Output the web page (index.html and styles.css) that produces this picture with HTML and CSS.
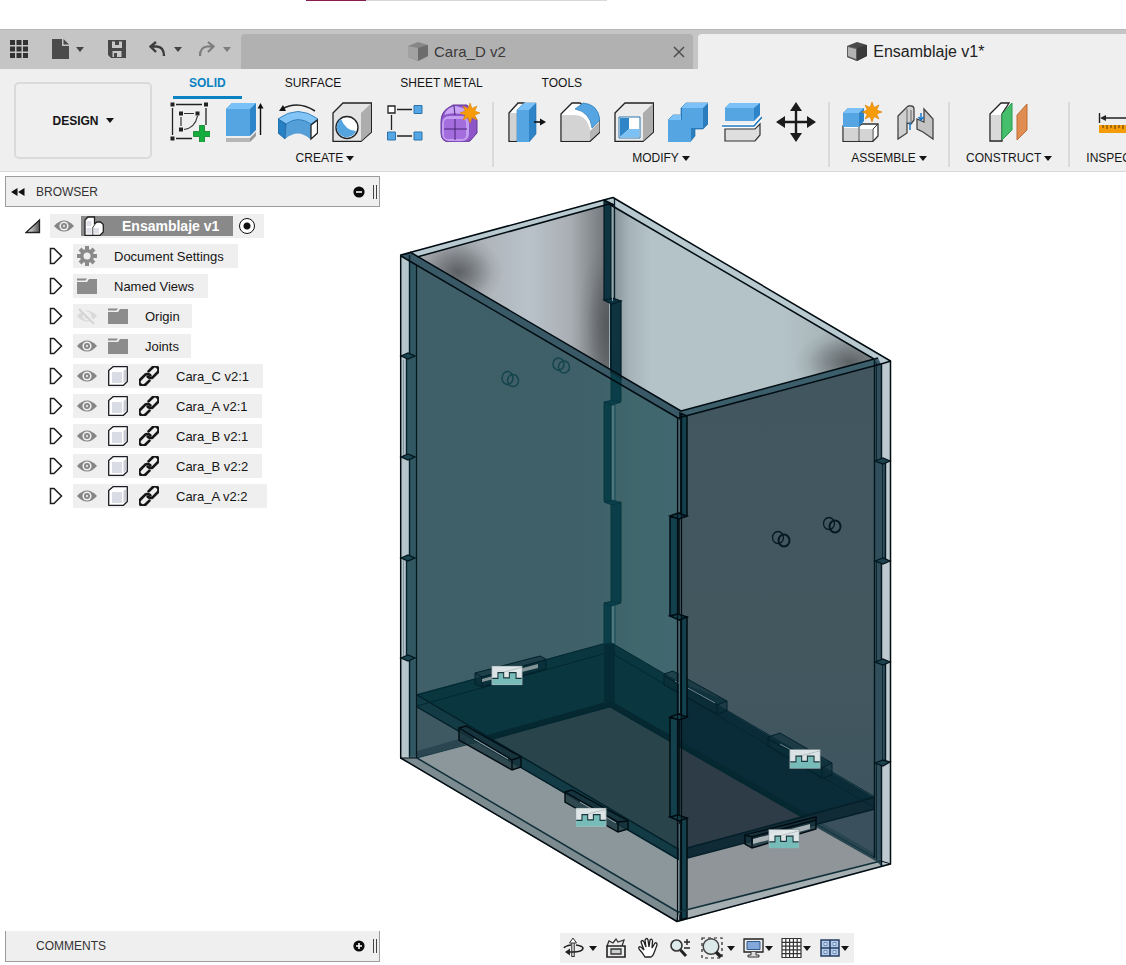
FILE: index.html
```html
<!DOCTYPE html>
<html lang="en">
<head>
<meta charset="utf-8">
<meta name="viewport" content="width=device-width, initial-scale=1">
<title>Ensamblaje v1</title>
<link rel="stylesheet" href="styles.css">
</head>
<body>
<svg class="defs" aria-hidden="true">
  <symbol id="eye" viewBox="0 0 20 20"><path d="M0 10Q10-1 20 10Q10 21 0 10Z" fill="#858585"/><circle cx="10" cy="10" r="4.6" fill="#efefef"/><circle cx="10" cy="10" r="3" fill="#858585"/><circle cx="10" cy="10" r="1.2" fill="#ddd"/></symbol>
  <symbol id="eye-off" viewBox="0 0 20 20"><path d="M0 10Q10-1 20 10Q10 21 0 10Z" fill="#d9d9d9"/><circle cx="10" cy="10" r="4.4" fill="#efefef"/><circle cx="10" cy="10" r="2.6" fill="#d9d9d9"/><path d="M3 2L18 18" stroke="#efefef" stroke-width="4"/><path d="M2 3L17 18" stroke="#d3d3d3" stroke-width="1.8"/></symbol>
  <symbol id="folder" viewBox="0 0 20 20"><path d="M0 6H10L12 3H20V18H0Z" fill="#8c8c8c"/><path d="M0 2.500H10L8.500 4.500H0Z" fill="#8c8c8c"/></symbol>
  <symbol id="gear" viewBox="0 0 20 20"><g stroke="#8a8a8a" stroke-width="4"><path d="M10 0V20M0 10H20M3 3L17 17M17 3L3 17"/></g><circle cx="10" cy="10" r="7" fill="#8a8a8a"/><circle cx="10" cy="10" r="3.500" fill="#efefef"/></symbol>
  <symbol id="body" viewBox="0 0 20 20"><path d="M.7 4.500L5 .7H19.300V15.500L15.500 19.300H.7Z" fill="#fff" stroke="#1b1b22" stroke-width="1.300" stroke-linejoin="round"/><path d="M4 6H14V17H4Z" fill="#d9dce4"/><path d="M15.500 5L18 3V15L15.500 17Z" fill="#c9ccd4"/></symbol>
  <symbol id="link" viewBox="0 0 20 20"><g transform="rotate(-45 10 10)" fill="none" stroke="#161616" stroke-width="2.700" stroke-linecap="round"><path d="M7 13.600H1.500A3.600 3.600 0 0 1 1.500 6.400H8A3.600 3.600 0 0 1 11.300 10.500"/><path d="M13 6.400H18.500A3.600 3.600 0 0 1 18.500 13.600H12A3.600 3.600 0 0 1 8.700 9.500"/></g></symbol>
  <symbol id="tri" viewBox="0 0 14 18"><path d="M1.500 1.500H5L12.500 9L5 16.500H1.500Z" fill="#fff" stroke="#1c1c1c" stroke-width="1.500"/></symbol>
  <symbol id="star" viewBox="-10 -10 20 20"><path d="M0-10L2-4.500L7-7L4.700-2L10 0L4.700 2L7 7L2 4.500L0 10L-2 4.500L-7 7L-4.700 2L-10 0L-4.700-2L-7-7L-2-4.500Z" fill="#f79b08" stroke="#d98300" stroke-width=".6"/></symbol>
  <symbol id="badge" viewBox="0 0 33 21"><path d="M.5 .5H32.500V20.500H.5Z" fill="#e4eaec" opacity=".96"/><path d="M1 14H7V7.500H13V13H19V7.500H26V14H32V20H1Z" fill="#78bcba"/><path d="M9 8L32 2" stroke="#b4c0c2"/><path d="M1 13.500H7V7.500H13V13H19V7.500H26V13.500H32" fill="none" stroke="#16343a" stroke-width="1.100"/><path d="M.5 .5H32.500V20.500H.5Z" fill="none" stroke="#6f8286" stroke-width=".6"/></symbol>
</svg>

<div class="app">
<div class="strip"><span class="strip-mark"></span><span class="strip-line"></span></div>

<header>
<div class="tabbar">
  <div class="quick">
    <button aria-label="Data panel"><svg width="19" height="19"><g fill="#333"><path d="M0 0h5v5H0zM6.500 0h5v5h-5zM13 0h5v5h-5zM0 6.500h5v5H0zM6.500 6.500h5v5h-5zM13 6.500h5v5h-5zM0 13h5v5H0zM6.500 13h5v5h-5zM13 13h5v5h-5z"/></g></svg></button>
    <button class="q-file" aria-label="File"><svg width="17" height="20"><path d="M0 0H10V7H17V20H0Z" fill="#4b4b4b"/><path d="M11.500 0L17 5.500H11.500Z" fill="#4b4b4b"/></svg><i class="caret"></i></button>
    <button class="q-save" aria-label="Save"><svg width="18" height="19"><path d="M0 0H18V18H3L0 15Z" fill="#484848"/><path d="M4 1.500H14V8H4ZM4.500 11H13.500V17H4.500Z" fill="#c8c8c8"/><path d="M7 0H11V5H7ZM6 13H9V17H6Z" fill="#484848"/></svg></button>
    <button class="q-undo" aria-label="Undo"><svg width="17" height="17"><path d="M7 1L1.500 5.500L7 11M1.500 5.500H8Q15 6 15 15" fill="none" stroke="#3c3c3c" stroke-width="2.400"/></svg><i class="caret"></i></button>
    <button class="q-redo" aria-label="Redo"><svg width="17" height="17"><path d="M10 1L15.500 5.500L10 11M15.500 5.500H9Q2 6 2 15" fill="none" stroke="#7d7d7d" stroke-width="2.200"/></svg><i class="caret"></i></button>
  </div>
  <div class="doc-tab">
    <a href="#d"><svg width="20" height="20"><path d="M0 4L10 0L20 3V14L10 19L0 15Z" fill="#868686"/><path d="M0 4L10 6V19L0 15Z" fill="#a2a2a2"/><path d="M10 6L20 3V14L10 19Z" fill="#6d6d6d"/></svg>Cara_D v2</a>
    <button aria-label="Close tab"><svg width="12" height="12"><path d="M1 1L11 11M11 1L1 11" stroke="#4e4e4e" stroke-width="1.500"/></svg></button>
  </div>
  <div class="doc-tab active">
    <a href="#e"><svg width="20" height="20"><path d="M0 4L10 0L20 3V14L10 19L0 15Z" fill="#4a4a4a"/><path d="M0 4L10 6V19L0 15Z" fill="#5b5b5b"/><path d="M1 5L9 7V17L1 14Z" fill="#b2b2b2"/><path d="M10 6L20 3V14L10 19Z" fill="#393939"/></svg>Ensamblaje v1*</a>
  </div>
</div>

<div class="ribbon">
  <button class="workspace-btn">DESIGN<i class="caret"></i></button>
  <div class="ribbon-main">
    <nav class="modes"><a class="on" href="#solid">SOLID</a><a href="#surface">SURFACE</a><a href="#sheet">SHEET METAL</a><a href="#tools">TOOLS</a></nav>
    <div class="groups">
      <section class="group create">
        <div class="tools">
          <button aria-label="Create sketch"><svg viewBox="0 0 40 40"><path d="M6 2.500H32M2.500 6V33M6 36.500H22M36 6V23" stroke="#222" stroke-width="1.300"/><path d="M14 11.500H24M11 15V24M27.500 14Q25 26 14 27.500" fill="none" stroke="#333" stroke-width="1.200"/><path d="M.5.5h4v4h-4zM34 .5h4v4h-4zM.5 34.500h4v4h-4zM9 9.500h4v4H9zM25.500 9.500h4v4h-4zM9 25.500h4v4H9z" fill="#222"/><path d="M29.500 23.500h5v6h6v5h-6v6h-5v-6h-6v-5h6z" fill="#16ad3c" stroke="#0b7f28" stroke-width=".8"/></svg></button>
          <button aria-label="Extrude"><svg viewBox="0 0 40 40"><path d="M2 36H26L32 30V34L26 40H2Z" fill="#999"/><path d="M2 36H26V40H2Z" fill="#b6b6b6"/><path d="M2 7L8 1H32V28L26 34H2Z" fill="#2e84c8"/><path d="M2 7L8 1H32L26 7Z" fill="#7ac1f8"/><path d="M2 7H26V34H2Z" fill="#54a5e2"/><path d="M36.500 33V5" stroke="#111" stroke-width="1.400"/><path d="M33.500 6.500L36.500 1L39.500 6.500Z" fill="#111"/></svg></button>
          <button aria-label="Revolve"><svg viewBox="0 0 40 40"><path d="M0 17Q20 2 40 17L38 33L32 37Q20 26 7 37L0 31Z" fill="#559fd8"/><path d="M0 17Q20 2 40 17L33 22Q20 13 8 22Z" fill="#82c4f6" stroke="#2370aa" stroke-width=".7"/><path d="M0 17L8 22L7 37L0 31Z" fill="#2580c4" stroke="#1f6097" stroke-width=".7"/><path d="M33 23L39.500 18V31L33 37Z" fill="#fff" stroke="#222" stroke-width="1.300"/><path d="M37 9Q20-2 4 7" fill="none" stroke="#222" stroke-width="1.500"/><path d="M1 9L5 3L8 9Z" fill="#111"/></svg></button>
          <button aria-label="Hole"><svg viewBox="0 0 40 40"><path d="M1 11L11 1H39.500V30L29 39.300H1Z" fill="#e4e4e4" stroke="#222" stroke-width="1.300"/><path d="M29 11L39 1.500V30L29 39Z" fill="#adadad"/><circle cx="15" cy="25.500" r="11" fill="#fff" stroke="#222" stroke-width="1.400"/><path d="M9 17A10 10 0 1 0 24 29Q14 29 9 17Z" fill="#54a4df"/></svg></button>
          <button aria-label="Rectangular pattern"><svg viewBox="0 0 40 40"><path d="M11 7.500H26M5.500 13V28M11 34H26" stroke="#222" stroke-width="1.300"/><path d="M2 4h7v7H2z" fill="#fff" stroke="#222" stroke-width="1.300"/><path d="M28 3.500h8v8h-8zM1.500 30h8v8h-8zM28 30h8v8h-8z" fill="#54a6e4" stroke="#2d73ab"/></svg></button>
          <button aria-label="Create form"><svg viewBox="0 0 40 40"><path d="M1 20Q1 10 8 6L13 3H27L37 18V31L30 39Q24 41 10 40Q1 40 1 31Z" fill="#8d55c7" stroke="#65389b"/><path d="M4 13Q7 5 16 4L26 7L29 14Q14 9 4 13Z" fill="#c9a4f4"/><rect x="2" y="14" width="27" height="25" rx="7" fill="#c39df0"/><rect x="4" y="17" width="22" height="20" rx="4" fill="#a36ddd"/><path d="M15 17V38M4 27H27M14 4L15 13" stroke="#4b2478" fill="none"/><use href="#star" x="20" y="1" width="20" height="20"/></svg></button>
        </div>
        <button class="group-name">CREATE<i class="caret"></i></button>
      </section>
      <section class="group">
        <div class="tools">
          <button aria-label="Press pull"><svg viewBox="0 0 40 40"><path d="M3 11L12 1H18V33L11 39.300H3Z" fill="#fff" stroke="#222" stroke-width="1.300"/><path d="M4 11H11V38.500H4Z" fill="#d2d2d2"/><path d="M11 8L18 1H30V32L23 40H11Z" fill="#2f84c8" stroke="#1f6ba8" stroke-width=".6"/><path d="M11 8L18 1H30L23 8Z" fill="#79c0f6"/><path d="M11 8H23V40H11Z" fill="#54a5e2"/><path d="M28 20H36" stroke="#111" stroke-width="1.600"/><path d="M34 16.500L40 20L34 23.500Z" fill="#111"/></svg></button>
          <button aria-label="Fillet"><svg viewBox="0 0 40 40"><path d="M1 12L12 1H20L40 18V30L30 39.300H1Z" fill="#fff" stroke="#222" stroke-width="1.300"/><path d="M2 13H12Q27 12 30 28V38.500H2Z" fill="#d3d3d3"/><path d="M30 29L39 20V30L30 38.500Z" fill="#b5b5b5"/><path d="M15 7L23 1Q38 2 40 18L32 26Q30 10 15 7Z" fill="#54a5e2" stroke="#2a79b5" stroke-width=".7"/></svg></button>
          <button aria-label="Shell"><svg viewBox="0 0 40 40"><path d="M1 11L11 1H39.500V30L29 39.300H1Z" fill="#ececec" stroke="#222" stroke-width="1.300"/><path d="M29 11L39 1.500V30L29 39Z" fill="#adadad"/><path d="M5 15H26V36H5Z" fill="#fff" stroke="#2b74ad"/><path d="M6 16H15V27L6 35Z" fill="#2f85c5"/><path d="M15 27H25V35H6Z" fill="#7bc1f5"/></svg></button>
          <button aria-label="Combine"><svg viewBox="0 0 40 40"><path d="M0 18L5 13H13V6L18 1H40V22L35 27H27V34L22 40H0Z" fill="#2b7dbe" stroke="#2474b3" stroke-width=".7"/><path d="M0 18H14V6H35V26H23V40H0Z" fill="#54a5e2"/><path d="M13 6L18 1H40L35 6ZM0 18L5 13H13V18Z" fill="#7cc2f8"/></svg></button>
          <button aria-label="Split body"><svg viewBox="0 0 40 40"><path d="M3 6L8 1H38V13L32 19H3Z" fill="#2e84c8"/><path d="M3 6L8 1H38L32 6Z" fill="#7bc1f7"/><path d="M3 6H32V19H3Z" fill="#54a5e2"/><path d="M3 27H33L38 22V33L33 39H3Z" fill="#dedede" stroke="#333" stroke-width="1.200"/><path d="M0 24H32L40 15" fill="none" stroke="#fff" stroke-width="4"/><path d="M0 24H32L40 15" fill="none" stroke="#2279bd" stroke-width="1.700"/></svg></button>
          <button aria-label="Move"><svg viewBox="0 0 40 40"><path d="M20 7V33M7 20H33" stroke="#1b1b1b" stroke-width="2.400"/><path d="M20 0L26 9H14ZM20 40L26 31H14ZM0 20L9 14V26ZM40 20L31 14V26Z" fill="#1b1b1b"/></svg></button>
        </div>
        <button class="group-name">MODIFY<i class="caret"></i></button>
      </section>
      <section class="group">
        <div class="tools">
          <button aria-label="New component"><svg viewBox="0 0 40 40"><path d="M1 24H17L20 22H36V34L31 39.300H1Z" fill="#fff" stroke="#333" stroke-width="1.300"/><path d="M2 26H16V38.500H2ZM18 27H30V38.500H18Z" fill="#d4d4d4"/><path d="M17 25V39M31 27L36 22M31 27V39" stroke="#333"/><path d="M1 11L6 6H22V19L17 25H1Z" fill="#2e84c8"/><path d="M1 11L6 6H22L17 11Z" fill="#7bc1f7"/><path d="M1 11H17V25H1Z" fill="#54a5e2"/><use href="#star" x="20" y="0" width="20" height="20"/></svg></button>
          <button aria-label="Joint"><svg viewBox="0 0 40 40"><path d="M2 14L10 6Q12 3 15 4Q18 4 18 7V18L15 22L11 21V31L2 37Z" fill="#cfcfcf" stroke="#444" stroke-width="1.300"/><path d="M11 7V21M15 22V8" fill="none" stroke="#666"/><path d="M28 7L37 17V37L27 30L21 27V17L28 20Z" fill="#c4c4c4" stroke="#444" stroke-width="1.300"/><path d="M14 20V28M25 11V18M22.500 15L25 18L27.500 15" fill="none" stroke="#1c79c8" stroke-width="1.500"/></svg></button>
        </div>
        <button class="group-name">ASSEMBLE<i class="caret"></i></button>
      </section>
      <section class="group wide">
        <div class="tools">
          <button aria-label="Offset plane"><svg viewBox="0 0 40 40"><path d="M1 12L12 1H20L13 12V39H1Z" fill="#fff" stroke="#222" stroke-width="1.300"/><path d="M2 13H12V38H2Z" fill="#d9d9d9"/><path d="M13 12L23 1V28L13 38Z" fill="#45bf6c" stroke="#299b4d"/><path d="M28 13L38 2V28L28 38Z" fill="#e18c50" stroke="#bd6d37"/></svg></button>
        </div>
        <button class="group-name">CONSTRUCT<i class="caret"></i></button>
      </section>
      <section class="group wide">
        <div class="tools">
          <button aria-label="Measure"><svg viewBox="0 0 40 40"><path d="M1.500 11V21M38.500 11V21M4 16H36" stroke="#222" stroke-width="1.400"/><path d="M2 16L8 13V19ZM38 16L32 13V19Z" fill="#222"/><path d="M1 23H39V31H1Z" fill="#f59c0b"/><path d="M5 23v3M9 23v4M13 23v3M17 23v4M21 23v3M25 23v4M29 23v3M33 23v4" stroke="#5b3a00"/></svg></button>
        </div>
        <button class="group-name">INSPECT<i class="caret"></i></button>
      </section>
    </div>
  </div>
</div>
</header>

<main class="workspace">
  <aside class="side">
    <div class="panel">
      <button aria-label="Collapse browser"><svg width="14" height="8"><path d="M6.500 0V8L0 4ZM13.500 0V8L7 4Z" fill="#111"/></svg></button>
      <h2>BROWSER</h2>
      <button aria-label="Hide all"><svg width="12" height="12"><circle cx="6" cy="6" r="5.600" fill="#0c0c0c"/><path d="M3 6H9" stroke="#fff" stroke-width="1.600"/></svg></button>
      <span class="grip"></span>
    </div>
    <ul class="tree">
      <li class="root"><button class="exp" aria-label="Collapse"><svg width="16" height="16"><defs><linearGradient id="rg"><stop stop-color="#fff"/><stop offset="1" stop-color="#555"/></linearGradient></defs><path d="M1 14.500L14.500 2V14.500Z" fill="url(#rg)" stroke="#222" stroke-width="1.300"/></svg></button>
        <div class="node"><svg><use href="#eye"/></svg><span class="selected"><svg class="asm" viewBox="0 0 20 20"><path d="M1 4L4 1H10.500V8L13 6H16.500L19.300 8.500V16L16 19.300H1Z" fill="#fff" stroke="#222" stroke-width="1.300"/><path d="M2.500 5H7.500V10H2.500ZM2.500 12H7.500V17.500H2.500ZM10 12H15V17.500H10Z" fill="#dde0e6"/><path d="M8.800 11V19M9 11L11 8.500" stroke="#444"/></svg><b>Ensamblaje v1</b></span><input type="radio" checked aria-label="Activate component"></div></li>
      <li><button class="exp" aria-label="Expand"><svg><use href="#tri"/></svg></button><div class="node"><svg><use href="#gear"/></svg><span>Document Settings</span></div></li>
      <li><button class="exp" aria-label="Expand"><svg><use href="#tri"/></svg></button><div class="node"><svg><use href="#folder"/></svg><span>Named Views</span></div></li>
      <li><button class="exp" aria-label="Expand"><svg><use href="#tri"/></svg></button><div class="node short"><svg><use href="#eye-off"/></svg><svg><use href="#folder"/></svg><span>Origin</span></div></li>
      <li><button class="exp" aria-label="Expand"><svg><use href="#tri"/></svg></button><div class="node short"><svg><use href="#eye"/></svg><svg><use href="#folder"/></svg><span>Joints</span></div></li>
      <li><button class="exp" aria-label="Expand"><svg><use href="#tri"/></svg></button><div class="node"><svg><use href="#eye"/></svg><svg><use href="#body"/></svg><svg><use href="#link"/></svg><span>Cara_C v2:1</span></div></li>
      <li><button class="exp" aria-label="Expand"><svg><use href="#tri"/></svg></button><div class="node"><svg><use href="#eye"/></svg><svg><use href="#body"/></svg><svg><use href="#link"/></svg><span>Cara_A v2:1</span></div></li>
      <li><button class="exp" aria-label="Expand"><svg><use href="#tri"/></svg></button><div class="node"><svg><use href="#eye"/></svg><svg><use href="#body"/></svg><svg><use href="#link"/></svg><span>Cara_B v2:1</span></div></li>
      <li><button class="exp" aria-label="Expand"><svg><use href="#tri"/></svg></button><div class="node"><svg><use href="#eye"/></svg><svg><use href="#body"/></svg><svg><use href="#link"/></svg><span>Cara_B v2:2</span></div></li>
      <li><button class="exp" aria-label="Expand"><svg><use href="#tri"/></svg></button><div class="node last"><svg><use href="#eye"/></svg><svg><use href="#body"/></svg><svg><use href="#link"/></svg><span>Cara_A v2:2</span></div></li>
    </ul>
    <div class="panel comments">
      <h2>COMMENTS</h2>
      <button aria-label="Add comment"><svg width="12" height="12"><circle cx="6" cy="6" r="5.600" fill="#0c0c0c"/><path d="M3 6H9M6 3V9" stroke="#fff" stroke-width="1.600"/></svg></button>
      <span class="grip"></span>
    </div>
  </aside>

  <section class="viewport">
    <svg class="model" viewBox="398 195 496 729" role="img" aria-label="Assembly of a transparent box">
      <defs>
        <linearGradient id="wl" gradientUnits="userSpaceOnUse" x1="417" y1="0" x2="604" y2="0"><stop stop-color="#a9adb2"/><stop offset=".2" stop-color="#a3a7ac"/><stop offset=".4" stop-color="#b0b7bd"/><stop offset=".6" stop-color="#b9c2ca"/><stop offset=".82" stop-color="#a9aeb3"/><stop offset="1" stop-color="#75797d"/></linearGradient>
        <linearGradient id="wr" gradientUnits="userSpaceOnUse" x1="614" y1="0" x2="874" y2="0"><stop stop-color="#87949a"/><stop offset=".06" stop-color="#a6b4b9"/><stop offset=".14" stop-color="#b4c3c8"/><stop offset=".65" stop-color="#b4c3c8"/><stop offset="1" stop-color="#9ca7aa"/></linearGradient>
        <radialGradient id="sh"><stop stop-color="#46494b" stop-opacity=".75"/><stop offset=".4" stop-color="#46494b" stop-opacity=".42"/><stop offset=".75" stop-color="#46494b" stop-opacity=".1"/><stop offset="1" stop-color="#46494b" stop-opacity="0"/></radialGradient>
        <linearGradient id="fl" x1="0" x2="1"><stop stop-color="#405f68"/><stop offset=".65" stop-color="#3f6068"/><stop offset=".85" stop-color="#3f676c"/><stop offset="1" stop-color="#416870"/></linearGradient>
        <linearGradient id="fr" x1="0" y1="0" x2="0" y2="1"><stop stop-color="#41565f"/><stop offset=".6" stop-color="#43575f"/><stop offset="1" stop-color="#3b545f"/></linearGradient>
        <clipPath id="cl"><path d="M417 257L609 204V370L604 367Z"/></clipPath>
        <clipPath id="cr"><path d="M613 205L874 359L682 411L613 370Z"/></clipPath>
      </defs>

      <!-- rear walls seen through the open top -->
      <path d="M400 255L612 197L891 361V864L677 922L400 758Z" fill="#b8c9cf"/>
      <path d="M417 257L609 204V370L604 367Z" fill="url(#wl)"/>
      <ellipse cx="458" cy="272" rx="46" ry="36" fill="url(#sh)" clip-path="url(#cl)"/>
      <ellipse cx="612" cy="325" rx="34" ry="90" fill="url(#sh)" clip-path="url(#cl)"/>
      <path d="M613 205L874 359L682 411L613 370Z" fill="url(#wr)"/>
      <ellipse cx="850" cy="362" rx="56" ry="34" fill="url(#sh)" clip-path="url(#cr)"/>

      <!-- front walls -->
      <path d="M409 259L678 418V860L417 758H409Z" fill="url(#fl)"/>
      <path d="M678 418L881 364V809L678 860Z" fill="url(#fr)"/>
      <path d="M400 256L410 252L681 411L678 418Z" fill="#3a5967"/>
      <path d="M678 418L681 411L878 358L881 364Z" fill="#3c5f6b"/>

      <!-- base plate and the region under the shelf -->
      <path d="M417 758L610 707L881 861L678 912Z" fill="#8b979a"/>
      <path d="M678 858L815 822L881 861L678 912Z" fill="#8f9599"/>
      <path d="M417 705L505 735L417 758Z" fill="#3f5962"/>
      <path d="M815 822L875 807V860L815 826Z" fill="#3a515d"/>
      <path d="M417 751L466 737V744L417 758Z" fill="#2b4650"/>
      <path d="M815 819L881 857V864L807 822Z" fill="#29454f"/>
      <path d="M400 758L417 758L678 912L677 922Z" fill="#7b8b90"/>
      <path d="M677 922L678 912L881 861L891 864Z" fill="#a5afb2"/>

      <!-- shelf -->
      <path d="M417 694L610 642L678 682V860L417 707Z" fill="#09363f"/>
      <path d="M678 682L875 798V808L678 860Z" fill="#0a2b38"/>
      <path d="M493 739L610 707L678 746V849Z" fill="#29444a"/>
      <path d="M678 746L804 818L678 851Z" fill="#2d3c46"/>
      <path d="M488 738L610 704L810 819" fill="none" stroke="#052831" stroke-width="6"/>
      <path d="M417 695L678 850V860L417 707Z" fill="#123b46"/>
      <path d="M678 850L875 797V809L678 860Z" fill="#102a36"/>
      <g fill="none" stroke="#032832" stroke-width="1">
        <path d="M417 695L610 642L875 797M417 706L610 652L875 808"/>
        <path d="M417 758L610 707L881 861" opacity=".6"/>
      </g>
      <path d="M417 695L680 850L875 797M417 707L680 860L875 809" fill="none" stroke="#041f28" stroke-width="1.300"/>

      <!-- shelf tenons -->
      <g fill="#0b2e39" fill-opacity=".65" stroke="#03202a" stroke-width="1">
        <path d="M475 673L540 656L546 659V669L482 687L475 684Z"/><path d="M482 677L546 660M482 677V687M475 673L482 677"/>
        <path d="M664 674L673 671L727 701V711L717 714L664 685Z"/><path d="M664 676L717 705L727 701M717 705V714"/>
        <path d="M768 737L780 733L832 763V775L822 778L768 746Z"/><path d="M768 739L822 768L832 763M822 768V778"/>
      </g>
      <path d="M482 679L538 664V668L482 682Z" fill="#839396"/>
      <path d="M675 681L715 703M780 744L820 766" stroke="#71858d" stroke-width="1"/>
      <g fill="#18333c" fill-opacity=".8" stroke="#000c12" stroke-width="1.400">
        <path d="M459 728L466 726L521 757V767L512 770L459 740Z"/><path d="M459 728L512 760L521 757M512 760V770"/>
        <path d="M565 792L572 790L628 821V829L618 832L565 802Z"/><path d="M565 792L618 822L628 821M618 822V832"/>
        <path d="M745 835L816 817V829L752 848L745 844Z"/><path d="M745 835L752 837L816 820M752 837V848"/>
      </g>
      <path d="M474 739L508 759M580 802L616 823" stroke="#9aabb0" stroke-width="1"/>
      <path d="M753 839L810 824V829L753 844Z" fill="#aab4b7"/>

      <!-- rear corner joint -->
      <g fill="#0e3441" stroke="#031d26" stroke-width="1.200">
        <path d="M604 200L611 204V303L604 300Z"/><path d="M611 302L621 301V379L611 373Z"/>
        <path d="M604 300L613 298L621 301L612 304Z"/>
      </g>
      <path d="M612.500 203V301" stroke="#91a7ae" stroke-width="1"/><path d="M614.500 199V300M610.500 303V370" stroke="#071f28" stroke-width="1.300"/>
      <g fill="#0a3e48" stroke="#083741" stroke-width="1">
        <path d="M611 373L621 379V401L611 403Z"/><path d="M604 402H611V504L604 501Z"/><path d="M611 503L621 502V602L611 604Z"/><path d="M604 603H611V642L604 644Z"/>
        <path d="M604 402L613 400L621 402L612 405ZM604 502L613 500L621 503L612 505ZM604 603L613 601L621 603L612 606Z"/>
      </g>
      <path d="M613 406V500M613 606V643" stroke="#5e8990"/><path d="M615 404V501M615 605V645" stroke="#174c56"/>
      <path d="M604 644H615V702H604Z" fill="#052b36"/>

      <!-- left edge -->
      <path d="M401 257L409 261V356H401ZM401 357H406V457H401ZM401 458H409V558H401ZM401 559H406V659H401ZM401 660H409V756L401 758Z" fill="#b7c6cc"/>
      <path d="M409 261L417 265V356H409ZM406 357H417V457H406ZM409 458H417V558H409ZM406 559H417V659H406ZM409 660H417V756H409Z" fill="#315762"/>
      <g fill="none" stroke="#03202b" stroke-width="1.400"><path d="M409.500 255V356M406.500 357V457M409.500 458V558M406.500 559V659M409.500 660V757"/></g>
      <path d="M403.500 360V456M403.500 560V658" stroke="#718990" stroke-width=".8"/>
      <g fill="#184550" stroke="#02151c" stroke-width="1.300"><path d="M401 356L408 353L415 356L408 359ZM401 457L408 454L415 457L408 460ZM401 558L408 555L415 558L408 561ZM401 658L408 655L415 658L408 661Z"/></g>
      <path d="M416.500 265V758" stroke="#03171d" stroke-width="1.200"/>

      <!-- right edge -->
      <path d="M881 364L891 361V864H881Z" fill="#bdc9ce"/>
      <path d="M874 360L881 364V461H886V561H881V662H886V763H881V866L874 858Z" fill="#304e5b"/>
      <g fill="none" stroke="#03151d" stroke-width="1.400"><path d="M874.500 360V858"/><path d="M881.500 364V461M885.500 462V561M881.500 562V662M885.500 663V762M881.500 763V866"/><path d="M876.500 363V460M882.500 462V560M876.500 562V661M882.500 663V761M876.500 763V860" stroke-width=".7"/></g>
      <g fill="#1d424e" stroke="#02151c" stroke-width="1.300"><path d="M875 461L883 458L890 461L883 464ZM875 561L883 558L890 561L883 564ZM875 662L883 659L890 662L883 665ZM875 763L883 760L890 762L883 766Z"/></g>

      <!-- front corner joint -->
      <g fill="#12404c" stroke="#000c12" stroke-width="1.500">
        <path d="M680 413L687 416V516L680 518Z"/><path d="M670 517L679 518V618L670 616Z"/><path d="M680 619L687 617V717L680 719Z"/><path d="M670 718L679 719V819L670 817Z"/><path d="M680 820L687 818V918L680 920Z"/>
        <path d="M670 516L678 513L687 516L679 519ZM670 616L678 614L687 617L679 620ZM670 717L678 714L687 717L679 720ZM670 817L678 815L687 818L679 821Z"/>
      </g>
      <path d="M677.500 418V921M681.500 413V921" stroke="#000c12" stroke-width="1.200"/><path d="M679.500 420V512M679.500 621V713M679.500 824V915" stroke="#49666e"/>

      <!-- outlines -->
      <g fill="none" stroke="#000c12" stroke-width="1.500" stroke-linejoin="round">
        <path d="M400.700 255V758L677 921.500L890.500 864V361L613 197.500L400.700 255L410 253"/>
        <path d="M417 257L609 204L874 359M410 252L681 411L878 358M401 256L678 418L881 364L891 361M604 200L614 205"/>
        <path d="M417 758L678 912L881 861" stroke="#112f39"/>
        <path d="M678 912L677 921M881 861L891 864M417 758L400 758" stroke-width="1"/>
      </g>

      <!-- bolt holes -->
      <g fill="none" stroke="#15444d" stroke-width="1.500"><ellipse cx="507.500" cy="378" rx="5.500" ry="6.500"/><ellipse cx="513" cy="380.500" rx="5.500" ry="6"/><ellipse cx="558.500" cy="364" rx="5.500" ry="6"/><ellipse cx="564" cy="367" rx="5.500" ry="6"/></g>
      <g fill="none" stroke="#051920" stroke-width="1.300"><ellipse cx="778" cy="537.500" rx="5.500" ry="6"/><ellipse cx="784" cy="540.500" rx="5.500" ry="6" stroke-width="1.900"/><ellipse cx="829" cy="523.500" rx="5.500" ry="6"/><ellipse cx="835" cy="526.500" rx="5.500" ry="6" stroke-width="1.900"/></g>

      <use href="#badge" x="490.500" y="665.500" width="33" height="20"/>
      <use href="#badge" x="574.500" y="807.500" width="33" height="20"/>
      <use href="#badge" x="788.500" y="749" width="33" height="20"/>
      <use href="#badge" x="767.500" y="829" width="33" height="20"/>
    </svg>

    <div class="navbar" role="toolbar" aria-label="Navigation">
      <button aria-label="Orbit"><svg viewBox="0 0 22 22"><path d="M10 3V20" stroke="#333" stroke-width="3.500"/><path d="M10 4V19" stroke="#fff" stroke-width="1.300"/><path d="M6.500 6L10 1L13.500 6Z" fill="#fff" stroke="#333"/><path d="M13 8Q20 9 20 11.500Q19 15 10 15H3M8 8Q2 9 1 11" fill="none" stroke="#222" stroke-width="1.600"/><path d="M2 15L7 11.500V18.500Z" fill="#222"/></svg><i class="caret"></i></button>
      <button class="plain" aria-label="Look at"><svg viewBox="0 0 22 22"><path d="M2 9L4 4L8 6L11 2L13 5L19 3L17 9" fill="#eee" stroke="#333" stroke-width="1.300"/><path d="M2 9H20V20H2Z" fill="#eee" stroke="#222" stroke-width="1.600"/><path d="M6 12H16V17H6Z" fill="#ccd2d4" stroke="#333" stroke-width="1.300"/></svg></button>
      <button class="plain" aria-label="Pan"><svg viewBox="0 0 22 22"><path d="M8 20Q5 15 2 12Q1 9 4 10L7 13L4 5Q5 2 7 5L9 10L8 3Q10 0 11 3L12 10L13 3Q15 1 15.500 4L15 11L18 6Q20 5 20 8L17 16Q16 19 14 20Z" fill="#fff" stroke="#222" stroke-width="1.300"/></svg></button>
      <button class="plain" aria-label="Zoom"><svg viewBox="0 0 22 22"><circle cx="7.500" cy="8.500" r="5.500" fill="#dceaea" stroke="#333" stroke-width="1.600"/><path d="M11.500 13L17 19" stroke="#222" stroke-width="3"/><path d="M15 5H21M18 2V8M15 11H21" stroke="#222" stroke-width="1.400"/></svg></button>
      <button aria-label="Fit"><svg viewBox="0 0 22 22"><path d="M1 1H21V21H1Z" fill="none" stroke="#222" stroke-width="1.200" stroke-dasharray="3 3"/><circle cx="10" cy="9.500" r="7.800" fill="#dbe9e9" stroke="#444" stroke-width="1.500"/><path d="M15 15L20 20" stroke="#222" stroke-width="3.500"/></svg><i class="caret"></i></button>
      <button class="tight" aria-label="Display settings"><svg viewBox="0 0 22 22"><path d="M1 2H20V15H1Z" fill="#eee" stroke="#222" stroke-width="1.300"/><path d="M4 4.500H17V12.500H4Z" fill="#83a9da" stroke="#355b8c"/><path d="M8 15V18H5V20H16V18H13V15" fill="#ddd" stroke="#333"/></svg><i class="caret"></i></button>
      <button class="tight" aria-label="Grid and snaps"><svg viewBox="0 0 22 22"><path d="M1 1.500H20V20.500H1ZM4.800 1V21M8.600 1V21M12.400 1V21M16.200 1V21M1 5.300H20M1 9.100H20M1 12.900H20M1 16.700H20" fill="#fff" stroke="#333" stroke-width="1.200"/></svg><i class="caret"></i></button>
      <button class="tight" aria-label="Viewports"><svg viewBox="0 0 22 22"><path d="M2 3H20V19H2Z" fill="#b3cbe8" stroke="#263e62" stroke-width="1.500"/><path d="M11 3V19M2 11H20" stroke="#263e62" stroke-width="1.600"/><path d="M5 5.500H8V8.500H5ZM14 5.500H17V8.500H14ZM5 13.500H8V16.500H5ZM14 13.500H17V16.500H14Z" fill="#dce8f5" stroke="#6b8dbd"/></svg><i class="caret"></i></button>
    </div>
  </section>
</main>
</div>
</body>
</html>
```
FILE: styles.css
```css
* { box-sizing: border-box; }
body {
  margin: 0;
  background: #fff;
  color: #151515;
  font-family: "Liberation Sans", Arial, sans-serif;
  font-size: 12px;
}
button {
  display: flex;
  align-items: center;
  padding: 0;
  border: 0;
  background: none;
  color: inherit;
  font: inherit;
}
a { color: inherit; text-decoration: none; }
svg { display: block; flex: none; }
h2 { margin: 0; font-size: 12px; font-weight: 400; }
.defs { position: absolute; width: 0; height: 0; }
.app { display: flex; flex-direction: column; min-height: 100vh; overflow: hidden; }
.caret {
  flex: none;
  border: 4px solid transparent;
  border-top: 5px solid currentColor;
  border-bottom: 0;
}

.strip { display: flex; height: 29px; padding-left: 306px; }
.strip-mark { width: 60px; height: 1px; background: #861c50; }
.strip-line { width: 241px; height: 1px; background: #d8d8d8; }

/* document tabs */
.tabbar {
  display: flex;
  height: 40px;
  padding-top: 4px;
  background: #c5c5c5;
  border-top: 1px solid #b8b8b8;
  color: #444;
}
.quick { display: flex; flex: none; width: 241px; padding: 0 9px 5px 10px; }
.quick .caret { margin-left: 12px; }
.q-file { margin-left: 23px; }
.q-file .caret { margin-left: 7px; }
.q-save { margin-left: 24px; }
.q-undo { margin-left: 23px; }
.quick .q-undo .caret, .quick .q-redo .caret { margin-left: 8px; }
.q-redo { margin-left: 16px; color: #7d7d7d; }
.doc-tab {
  display: flex;
  flex: 452 1 0;
  align-items: center;
  padding-right: 8px;
  margin-right: 5px;
  border-radius: 4px 4px 0 0;
  background: #b1b1b1;
  color: #3a3a3a;
  font-size: 15px;
}
.doc-tab a { display: flex; flex: 1; align-items: center; justify-content: center; gap: 6px; }
.doc-tab.active {
  flex-grow: 428;
  padding: 0 0 0 8px;
  margin-right: 0;
  border-radius: 4px 0 0 0;
  background: #efefef;
  color: #222;
  font-size: 16px;
}

/* ribbon */
.ribbon {
  display: flex;
  height: 103px;
  background: #efefef;
  border-bottom: 1px solid #d9d9d9;
  overflow: hidden;
}
.workspace-btn {
  flex: none;
  justify-content: center;
  gap: 7px;
  width: 138px;
  height: 77px;
  margin: 13px 0 0 14px;
  border: 2px solid #dadada;
  border-radius: 5px;
  font-weight: 700;
}
.ribbon-main { flex: 1; min-width: 0; }
.modes { display: flex; gap: 27px; height: 30px; padding-left: 21px; line-height: 28px; }
.modes a { padding: 0 16px; white-space: nowrap; }
.modes .on { border-bottom: 3px solid #0a82c4; color: #0a82c4; font-weight: 700; }
.groups { display: flex; }
.group {
  display: flex;
  flex: none;
  flex-direction: column;
  align-items: center;
  gap: 8px;
  height: 65px;
  margin-top: 3px;
  padding: 0 12px;
  border-right: 2px solid #dadada;
}
.group.create { padding-left: 18px; }
.group.wide { padding: 0 16px; }
.group:last-child { border: 0; }
.tools { display: flex; gap: 14px; }
.tools svg { width: 40px; height: 40px; }
.group-name { gap: 3px; line-height: 16px; }

/* workspace */
.workspace { display: grid; flex: 1; grid-template-columns: 380px 1fr; }
.side { display: flex; flex-direction: column; padding: 4px 0 3px 5px; }
.panel {
  display: flex;
  flex: none;
  align-items: center;
  height: 31px;
  padding: 0 2px 0 5px;
  border: 1px solid #9c9c9c;
  background: #efefef;
  color: #333;
}
.panel h2 { flex: 1; margin-left: 11px; }
.comments { margin-top: auto; border-top: 0; }
.comments h2 { margin-left: 25px; }
.grip { width: 4px; height: 14px; margin-left: 8px; border: solid #444; border-width: 0 1px; }
.tree { display: grid; gap: 6px; margin: 7px 0 20px; padding: 0; list-style: none; font-size: 13px; }
.tree li { display: flex; height: 24px; padding-left: 44px; }
.exp { width: 24px; }
.exp svg { width: 14px; height: 18px; }
.node { display: flex; align-items: center; gap: 11px; padding: 0 14px 0 4px; background: #efefef; white-space: nowrap; }
.node svg { width: 20px; height: 20px; }
.node > span { margin-left: 6px; }
.node.short { padding-right: 12px; }
.node.last { padding-right: 19px; }
.tree .root { padding-left: 20px; }
.root .exp { width: 25px; }
.root .exp svg { width: 16px; height: 16px; }
.root .node { gap: 6px; padding-right: 9px; }
.root .node .selected {
  display: flex;
  align-items: center;
  gap: 18px;
  height: 20px;
  margin-left: 1px;
  padding: 0 14px 0 3px;
  background: #898989;
  color: #fff;
  font-size: 14px;
}
.root input {
  appearance: none;
  width: 16px;
  height: 16px;
  margin: 0;
  border: 1px solid #111;
  border-radius: 50%;
  background: radial-gradient(circle, #111 0 3px, #fff 4px);
}

.viewport { display: flex; flex-direction: column; align-items: flex-start; padding: 23px 0 2px 18px; }
.model { width: 496px; max-width: 100%; height: auto; }
.navbar {
  display: flex;
  gap: 8px;
  height: 30px;
  margin: auto 0 0 162px;
  padding: 0 5px 0 3px;
  background: #efefef;
}
.navbar button { gap: 4px; }
.navbar .tight { gap: 0; }
.navbar .plain { width: 24px; }
.navbar svg { width: 22px; height: 22px; }
```
